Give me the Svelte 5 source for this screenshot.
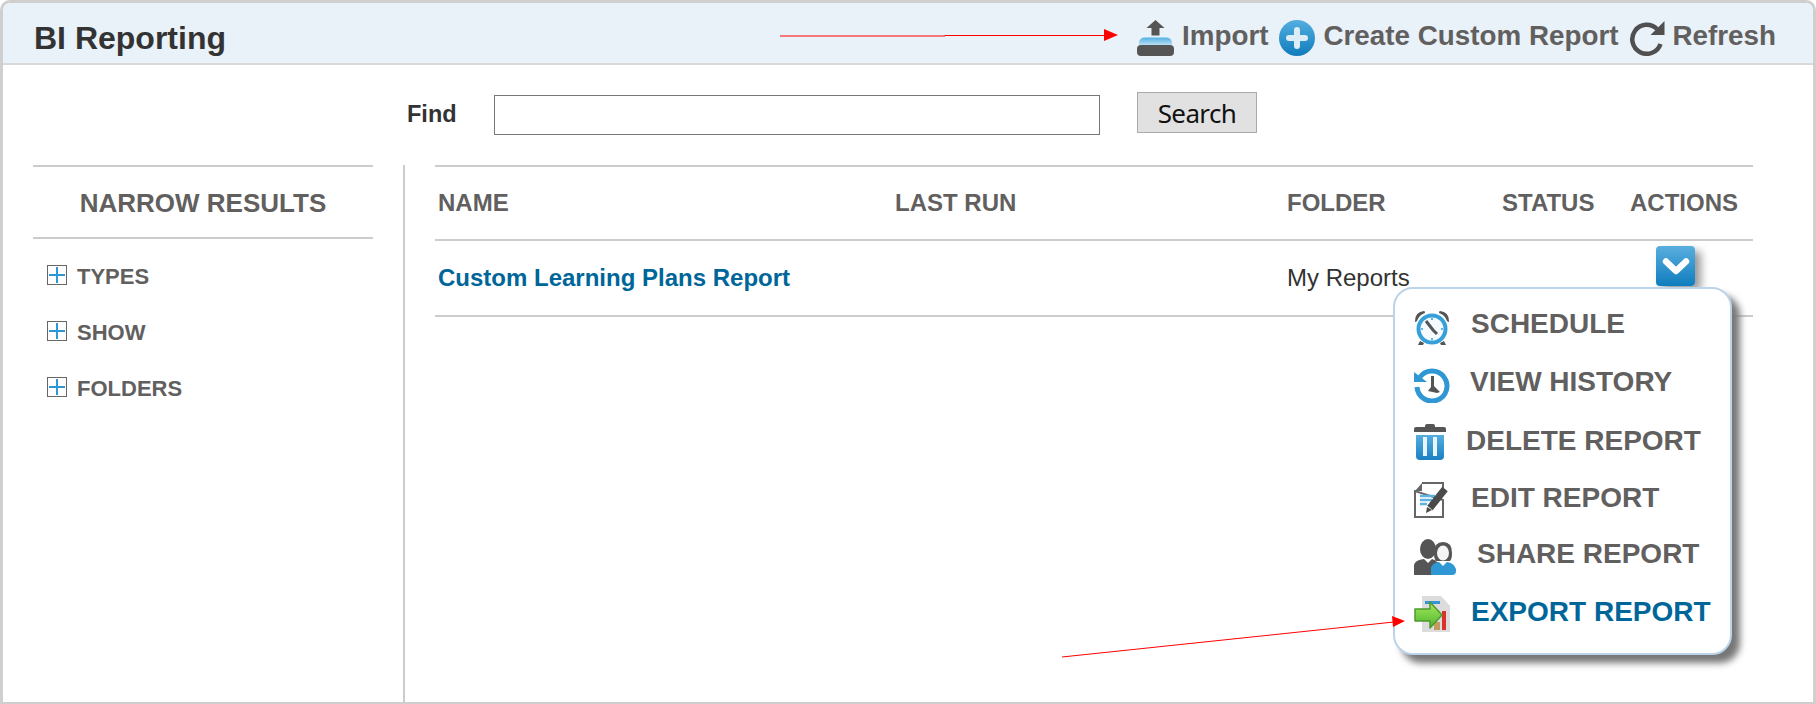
<script>
	const filters = ['TYPES', 'SHOW', 'FOLDERS'];
	const columns = ['NAME', 'LAST RUN', 'FOLDER', 'STATUS', 'ACTIONS'];
</script>

<div class="frame">
	<header class="topbar">
		<h1>BI Reporting</h1>
		<nav class="actions">
			<a href="#import" class="action">
				<svg width="37" height="36" viewBox="0 0 37 36">
					<defs>
						<linearGradient id="imp" x1="0" y1="0" x2="0" y2="1">
							<stop offset="0" stop-color="#4fb0e3" />
							<stop offset="1" stop-color="#bcdff2" />
						</linearGradient>
					</defs>
					<path d="M18.5 0 L27.500 8 H22.500 V15.500 H14.500 V8 H9.500 Z" fill="#555" />
					<path d="M2 25 V22 Q3 17.500 8 17.500 H29 Q34 17.500 35 22 V25 Z" fill="url(#imp)" />
					<path d="M0 29 Q0 25 4 25 H33 Q37 25 37 29 V32 Q37 36 33 36 H4 Q0 36 0 32 Z" fill="#555" />
				</svg>
				<span>Import</span>
			</a>
			<a href="#create" class="action create">
				<svg width="36" height="36" viewBox="0 0 36 36">
					<defs>
						<linearGradient id="blue" x1="0" y1="0" x2="0" y2="1">
							<stop offset="0" stop-color="#55aedf" />
							<stop offset="1" stop-color="#0f7cbc" />
						</linearGradient>
					</defs>
					<circle cx="18" cy="18" r="18" fill="url(#blue)" />
					<path d="M18 10 V26 M10 18 H26" stroke="#dcedf7" stroke-width="6" stroke-linecap="round" />
				</svg>
				<span>Create Custom Report</span>
			</a>
			<a href="#refresh" class="action refresh">
				<svg width="36" height="36" viewBox="0 0 36 36">
					<path d="M28 9 A14.5 14.5 0 1 0 31.5 24" fill="none" stroke="#4f4f4f" stroke-width="4.5" />
					<path d="M35.5 1 V15 H21.5 Z" fill="#4f4f4f" />
				</svg>
				<span>Refresh</span>
			</a>
		</nav>
	</header>

	<form class="search">
		<label for="find">Find</label>
		<input id="find" type="text" />
		<button type="button">Search</button>
	</form>

	<div class="body">
		<aside class="sidebar">
			<h2>NARROW RESULTS</h2>
			<ul>
				{#each filters as filter}
					<li>
						<span class="plus"></span>
						<span>{filter}</span>
					</li>
				{/each}
			</ul>
		</aside>

		<main class="results">
			<div class="grid head">
				{#each columns as col}
					<div>{col}</div>
				{/each}
			</div>
			<div class="grid row">
				<div><a href="#report" class="report">Custom Learning Plans Report</a></div>
				<div></div>
				<div class="folder">My Reports</div>
				<div></div>
				<div class="cell-action">
					<span class="chevron">
						<svg width="28" height="19" viewBox="0 0 28 19">
							<path d="M4 4.500 L14 14 L24 4.500" fill="none" stroke="#fff" stroke-width="6.500" stroke-linecap="round" stroke-linejoin="round" />
						</svg>
					</span>
				</div>
			</div>

			<div class="menu">
				<div class="item schedule">
					<svg width="36" height="36" viewBox="0 0 36 36">
						<path d="M1 11 Q1 2 10 1 Q11 1 11 3 Q5 5 3 11 Q1 13 1 11 Z M35 11 Q35 2 26 1 Q25 1 25 3 Q31 5 33 11 Q35 13 35 11 Z" fill="#555" />
						<path d="M6 31 L4 35 H9 L10 33 Z M30 31 L32 35 H27 L26 33 Z" fill="#555" />
						<circle cx="18" cy="19" r="13.5" fill="#f4fafd" stroke="#37a0d8" stroke-width="4" />
						<path d="M12 11 L19 20 L23 24" fill="none" stroke="#555" stroke-width="3" />
						<path d="M18 8 V10 M18 28 V30 M7 19 H9 M27 19 H29" stroke="#37a0d8" stroke-width="1.5" />
					</svg>
					<span>SCHEDULE</span>
				</div>
				<div class="item history">
					<svg width="36" height="36" viewBox="0 0 36 36">
						<path d="M6 10 A15 15 0 1 1 3 20" fill="none" stroke="#2f97d3" stroke-width="5" />
						<path d="M0 5 L13 15 H0 Z" fill="#2f97d3" />
						<path d="M17 9 H20 V19 L26 25 L23 26 L14 24 L17 20 Z" fill="#555" />
					</svg>
					<span>VIEW HISTORY</span>
				</div>
				<div class="item delete">
					<svg width="32" height="36" viewBox="0 0 32 36">
						<defs>
							<linearGradient id="bin" x1="0" y1="0" x2="0" y2="1">
								<stop offset="0" stop-color="#55aedf" />
								<stop offset="1" stop-color="#1a80c2" />
							</linearGradient>
						</defs>
						<path d="M11 2 Q11 0 13 0 H19 Q21 0 21 2 V3 H30 Q32 3 32 5 V8 H0 V5 Q0 3 2 3 H11 Z" fill="#555" />
						<path d="M2 11 H30 V32 Q30 36 26 36 H6 Q2 36 2 32 Z" fill="url(#bin)" />
						<rect x="9" y="13" width="4" height="19" fill="#eaf5fb" />
						<rect x="19" y="13" width="4" height="19" fill="#eaf5fb" />
					</svg>
					<span>DELETE REPORT</span>
				</div>
				<div class="item edit">
					<svg width="36" height="36" viewBox="0 0 36 36">
						<path d="M8 1 H29 V6 M29 18 V35 H1 V9 Z" fill="none" stroke="#666" stroke-width="2" />
						<path d="M1 9 L8 1 L8 9 Z" fill="#666" />
						<path d="M6 14 H21 M6 18 H18 M6 22 H13" stroke="#5cb3e2" stroke-width="2.4" />
						<path d="M16 26 L31 7" stroke="#4a4a4a" stroke-width="7" />
						<path d="M12 31 L13 25 L18 28 Z" fill="#4a4a4a" />
					</svg>
					<span>EDIT REPORT</span>
				</div>
				<div class="item share">
					<svg width="42" height="36" viewBox="0 0 42 36">
						<ellipse cx="14" cy="10" rx="8" ry="10" fill="#555" />
						<path d="M0 36 V26 Q1 21 10 20 L14 24 L18 20 Q22 21 24 24 V36 Z" fill="#555" />
						<path d="M20 14 Q20 3 29 3 Q38 3 38 14 Q38 20 36 22 H22 Q20 20 20 14 Z" fill="#555" />
						<ellipse cx="29" cy="14" rx="6" ry="7.5" fill="#f5f5f5" />
						<path d="M17 36 V29 Q18 24 25 23 L29 27 L33 23 Q40 24 42 30 V32 Q42 36 38 36 Z" fill="#2f97d3" />
					</svg>
					<span>SHARE REPORT</span>
				</div>
				<div class="item export">
					<svg width="36" height="36" viewBox="0 0 36 36">
						<defs>
							<linearGradient id="arrow" x1="0" y1="0" x2="0" y2="1">
								<stop offset="0" stop-color="#a4ea5c" />
								<stop offset="1" stop-color="#4fb52f" />
							</linearGradient>
						</defs>
						<path d="M8 0 H27 L36 10 V36 H8 Z" fill="#dcdcdc" />
						<rect x="11" y="5" width="15" height="3" fill="#3596d3" />
						<rect x="28" y="15" width="4" height="19" fill="#d8342b" />
						<rect x="20" y="26" width="6" height="8" fill="#c39a62" />
						<path d="M1 13 H16 V6 L28 19 L16 32 V25 H1 Z" fill="url(#arrow)" stroke="#4d9a2e" stroke-width="1.5" stroke-linejoin="round" />
					</svg>
					<span>EXPORT REPORT</span>
				</div>
			</div>
		</main>
	</div>

	<svg class="arrows" width="1816" height="704" viewBox="0 0 1816 704">
		<path d="M780 36 H945 V35.500 H1106" stroke="#f00" stroke-width="1" fill="none" />
		<path d="M1118 35 L1104 29 V41 Z" fill="#f00" />
		<path d="M1062 657 L1394 622" stroke="#f00" stroke-width="1" fill="none" />
		<path d="M1405 621 L1392 616 L1393 627 Z" fill="#f00" />
	</svg>
</div>

<style>
	:global(body) {
		margin: 0;
		background: #fff;
	}

	.frame {
		position: relative;
		box-sizing: border-box;
		width: 1816px;
		height: 704px;
		overflow: hidden;
		border: 3px solid #cfcfcf;
		border-bottom-width: 2px;
		border-radius: 10px 10px 0 0;
		font-family: 'Liberation Sans', Arial, sans-serif;
		color: #333;
	}

	.topbar {
		display: flex;
		align-items: center;
		justify-content: space-between;
		box-sizing: border-box;
		height: 62px;
		padding: 10px 37px 0 31px;
		background: #e9f1f9;
		border-bottom: 2px solid #d9d9d9;
	}

	h1 {
		margin: 0;
		font-size: 32px;
		font-weight: bold;
		color: #333;
	}

	.actions {
		display: flex;
		align-items: center;
	}

	.action {
		display: flex;
		align-items: center;
		gap: 8px;
		font-size: 27.8px;
		font-weight: bold;
		color: #625f5f;
		text-decoration: none;
	}

	.create {
		margin-left: 11px;
	}

	.refresh {
		gap: 7px;
		margin-left: 11px;
	}

	.action span {
		position: relative;
		top: -2px;
	}

	.search {
		display: flex;
		align-items: center;
		height: 41px;
		margin-top: 27px;
		padding-left: 404px;
	}

	label {
		width: 87px;
		padding-top: 4px;
		font-size: 23.5px;
		font-weight: bold;
		color: #333;
	}

	input {
		box-sizing: border-box;
		width: 606px;
		height: 40px;
		margin-top: 4px;
		padding: 0;
		border: 1px solid #777;
		background: #fff;
	}

	button {
		box-sizing: border-box;
		width: 120px;
		height: 41px;
		margin-left: 37px;
		padding: 0;
		border: 1px solid #aaa;
		background: #e1e1e1;
		font-family: 'Noto Sans', sans-serif;
		font-size: 26px;
		letter-spacing: -0.6px;
		color: #111;
	}

	.body {
		display: flex;
		height: 540px;
		margin-top: 32px;
		padding-left: 30px;
	}

	.sidebar {
		box-sizing: border-box;
		width: 340px;
	}

	h2 {
		display: flex;
		align-items: center;
		justify-content: center;
		box-sizing: border-box;
		height: 74px;
		margin: 0;
		padding-top: 3px;
		border-top: 2px solid #ccc;
		border-bottom: 2px solid #ccc;
		font-size: 26px;
		font-weight: bold;
		color: #625f5f;
	}

	ul {
		margin: 26px 0 0;
		padding: 0 0 0 14px;
		list-style: none;
	}

	li {
		display: flex;
		align-items: center;
		gap: 10px;
		height: 20px;
		margin-bottom: 36px;
		font-size: 22px;
		font-weight: bold;
		color: #625f5f;
	}

	li span:last-child {
		padding-top: 3px;
	}

	.plus {
		box-sizing: border-box;
		width: 20px;
		height: 20px;
		border: 1px solid #666;
		background:
			linear-gradient(#2f97d3, #2f97d3) center / 16px 2px no-repeat,
			linear-gradient(#2f97d3, #2f97d3) center / 2px 16px no-repeat,
			#fff;
	}

	.results {
		position: relative;
		flex: 1;
		margin: 0 60px 0 30px;
		padding-left: 30px;
		border-left: 2px solid #ccc;
	}

	.grid {
		display: grid;
		grid-template-columns: 457px 392px 215px 128px 1fr;
		align-items: center;
		box-sizing: border-box;
		padding-left: 3px;
		border-top: 2px solid #ccc;
	}

	.head {
		height: 74px;
		font-size: 24px;
		font-weight: bold;
		color: #625f5f;
	}

	.row {
		height: 78px;
		border-bottom: 2px solid #ccc;
		font-size: 24px;
	}

	.report {
		font-weight: bold;
		color: #006699;
		text-decoration: none;
	}

	.folder {
		color: #333;
	}

	.cell-action {
		align-self: start;
	}

	.chevron {
		display: flex;
		align-items: center;
		justify-content: center;
		box-sizing: border-box;
		width: 39px;
		height: 40px;
		margin: 5px 0 0 26px;
		border-radius: 4px;
		background: linear-gradient(#5aaede, #0f7dbd);
		box-shadow: 6px 5px 8px #999;
	}

	.menu {
		position: absolute;
		top: 122px;
		right: 21px;
		box-sizing: border-box;
		width: 339px;
		height: 368px;
		padding: 21px 0 0 19px;
		background: #fff;
		border: 2px solid #bcd4ea;
		border-radius: 20px;
		box-shadow: 8px 8px 7px #777;
	}

	.item {
		display: flex;
		align-items: center;
		height: 36px;
		margin-bottom: 21.2px;
		font-size: 28px;
		font-weight: bold;
		color: #625f5f;
	}

	.item span {
		position: absolute;
		left: 76px;
	}

	.schedule span { margin-top: -8px; }
	.history span { margin-top: -6px; left: 75px; }
	.delete span { margin-top: -2px; left: 71px; }
	.edit span { margin-top: -4px; }
	.share span { margin-top: -6px; left: 82px; }
	.export span { margin-top: -4px; color: #006699; }

	.arrows {
		position: absolute;
		top: -3px;
		left: -3px;
		pointer-events: none;
	}
</style>
